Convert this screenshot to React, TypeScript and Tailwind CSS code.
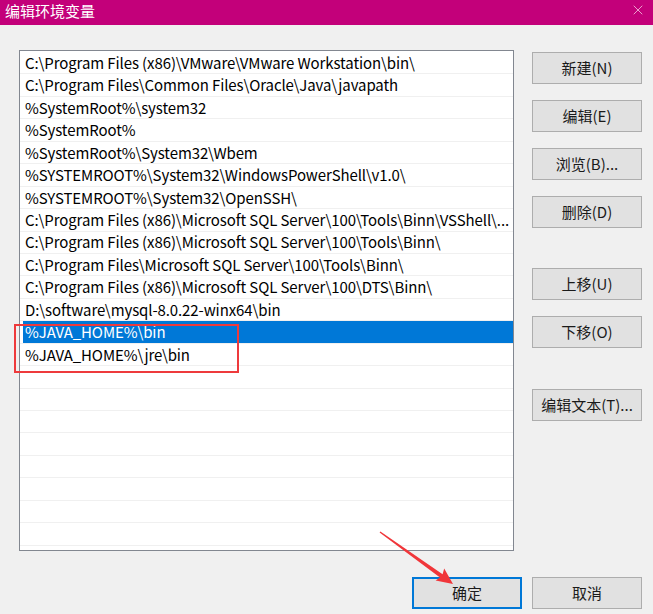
import { X } from 'lucide-react'

const paths = [
  'C:\\Program Files (x86)\\VMware\\VMware Workstation\\bin\\',
  'C:\\Program Files\\Common Files\\Oracle\\Java\\javapath',
  '%SystemRoot%\\system32',
  '%SystemRoot%',
  '%SystemRoot%\\System32\\Wbem',
  '%SYSTEMROOT%\\System32\\WindowsPowerShell\\v1.0\\',
  '%SYSTEMROOT%\\System32\\OpenSSH\\',
  'C:\\Program Files (x86)\\Microsoft SQL Server\\100\\Tools\\Binn\\VSShell\\...',
  'C:\\Program Files (x86)\\Microsoft SQL Server\\100\\Tools\\Binn\\',
  'C:\\Program Files\\Microsoft SQL Server\\100\\Tools\\Binn\\',
  'C:\\Program Files (x86)\\Microsoft SQL Server\\100\\DTS\\Binn\\',
  'D:\\software\\mysql-8.0.22-winx64\\bin',
  '%JAVA_HOME%\\bin',
  '%JAVA_HOME%\\jre\\bin',
]

const SELECTED = 12
const ROWS = 22

function WinButton({ label, primary = false, className = '' }: { label: string; primary?: boolean; className?: string }) {
  return (
    <button
      type="button"
      className={
        'h-[32px] w-[110px] bg-[#e1e1e1] text-[15px] text-[#1a1a1a] flex items-center justify-center ' +
        (primary ? 'border-2 border-[#0078d7] ' : 'border border-[#adadad] ') +
        className
      }
    >
      {label}
    </button>
  )
}

export default function App() {
  const rows = Array.from({ length: ROWS }, (_, i) => paths[i] ?? '')

  return (
    <div
      className="relative w-[653px] h-[614px] overflow-hidden bg-[#f0f0f0] text-black"
      style={{ fontFamily: '"Segoe UI", "Noto Sans CJK SC", "Noto Sans", sans-serif' }}
    >
      {/* title bar */}
      <div className="h-[25px] bg-[#c3007a] flex items-center justify-between pl-[5px] pr-[7px]">
        <span className="text-[15px] text-white leading-none -mt-[5px]">编辑环境变量</span>
        <X className="text-[#f6c9e3] -mt-[6px]" size={16} strokeWidth={1.2} />
      </div>

      <div className="flex pl-[19px] pt-[25px]">
        {/* list */}
        <div className="relative w-[495px] h-[501px] border border-[#828790] bg-white pt-[1px]">
          {rows.map((p, i) => (
            <div key={i} className="h-[22.45px] border-b border-[#f0f0f0]">
              <div
                className={
                  'ml-[3px] h-full flex items-center pl-[2px] pr-[2px] pt-[1px] text-[15px] whitespace-nowrap overflow-hidden tracking-[-0.1px] ' +
                  (i === SELECTED ? 'bg-[#0078d7] text-white' : 'text-black')
                }
              >
                {p}
              </div>
            </div>
          ))}
          {/* annotation box */}
          <div className="absolute left-[-6px] top-[273px] w-[225px] h-[49px] border-2 border-[#ee3a3c] pointer-events-none" />
        </div>

        {/* side buttons */}
        <div className="ml-[18px] flex flex-col pt-[2px]">
          <WinButton label="新建(N)" />
          <WinButton label="编辑(E)" className="mt-[16px]" />
          <WinButton label="浏览(B)..." className="mt-[16px]" />
          <WinButton label="删除(D)" className="mt-[16px]" />
          <WinButton label="上移(U)" className="mt-[40px]" />
          <WinButton label="下移(O)" className="mt-[16px]" />
          <WinButton label="编辑文本(T)..." className="mt-[41px]" />
        </div>
      </div>

      {/* bottom buttons */}
      <div className="flex justify-end gap-[10px] pr-[11px] mt-[26px]">
        <WinButton label="确定" primary />
        <WinButton label="取消" />
      </div>

      {/* annotation arrow */}
      <svg className="absolute left-0 top-0 pointer-events-none" width="653" height="614" viewBox="0 0 653 614">
        <polygon
          points="380.4,531.5 442.6,574.2 444.2,568.6 453,584 435.6,580.6 440.0,577.6 379.6,532.5"
          fill="#f0363a"
        />
      </svg>
    </div>
  )
}
